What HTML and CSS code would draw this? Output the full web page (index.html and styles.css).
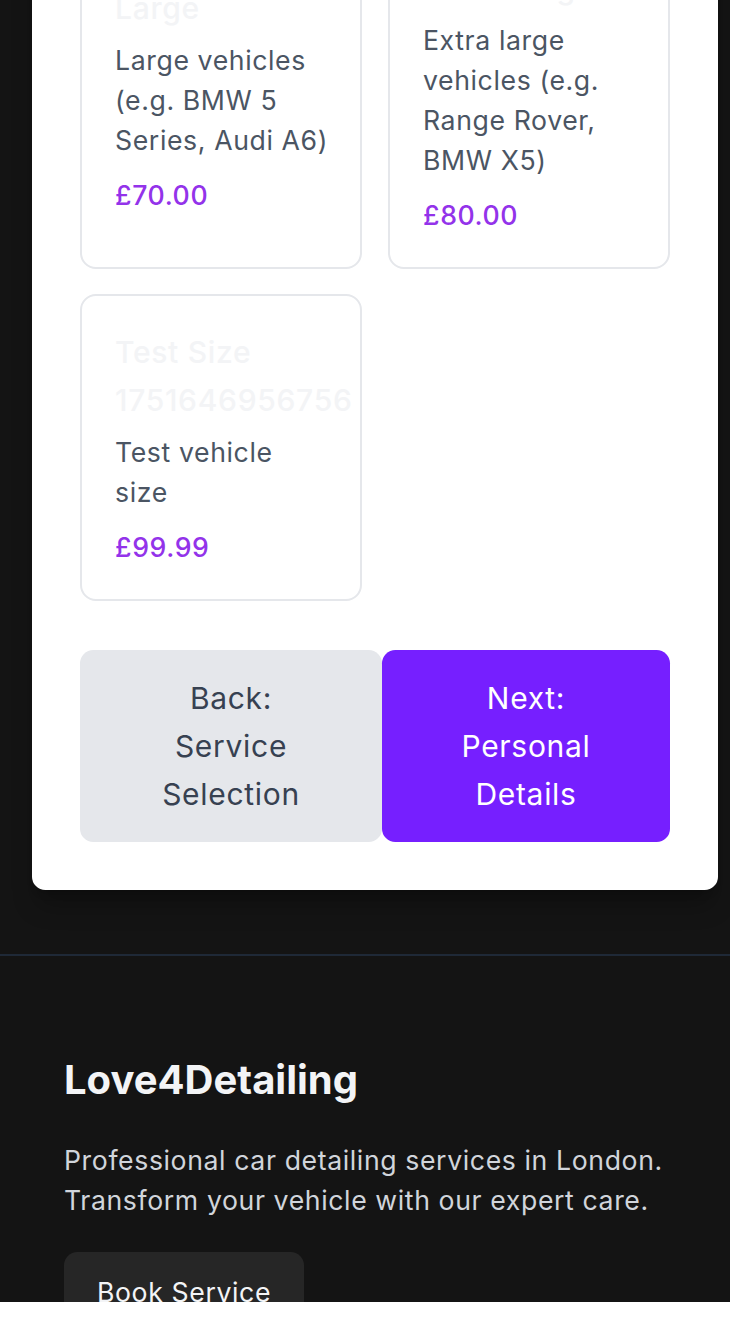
FILE: index.html
```html
<!DOCTYPE html>
<html lang="en">
<head>
<meta charset="utf-8">
<title>Love4Detailing – Vehicle Size</title>
<link rel="stylesheet" href="styles.css">
</head>
<body>
<div class="screen">
  <main class="page">
    <section class="panel">
      <div class="sizes">
        <div class="size">
          <div class="size-title">Large</div>
          <div class="size-desc">Large vehicles<br>(e.g. BMW 5<br>Series, Audi A6)</div>
          <div class="size-price">£70.00</div>
        </div>
        <div class="size">
          <div class="size-title">Extra Large</div>
          <div class="size-desc">Extra large<br>vehicles (e.g.<br>Range Rover,<br>BMW X5)</div>
          <div class="size-price">£80.00</div>
        </div>
        <div class="size">
          <div class="size-title">Test Size 1751646956756</div>
          <div class="size-desc">Test vehicle<br>size</div>
          <div class="size-price">£99.99</div>
        </div>
      </div>
      <div class="actions">
        <button class="btn btn-back">Back:<br>Service<br>Selection</button>
        <button class="btn btn-next">Next:<br>Personal<br>Details</button>
      </div>
    </section>
  </main>
  <footer class="footer">
    <h2 class="brand">Love4Detailing</h2>
    <p class="about">Professional car detailing services in London.<br>Transform your vehicle with our expert care.</p>
    <a class="book" href="#">Book Service</a>
  </footer>
</div>
</body>
</html>
```
FILE: styles.css
```css
html {
  background: #ffffff;
}

body {
  margin: 0;
  font-family: Inter, "Noto Sans", "Liberation Sans", sans-serif;
}

.screen {
  width: 730px;
  height: 1302px;
  overflow: hidden;
  background: #141414;
}

.page {
  padding: 0 12px 64px 32px;
}

.panel {
  background: #ffffff;
  border-radius: 13.33px;
  padding: 0 48px 48px;
  box-shadow: 0 20px 25px -5px rgba(0, 0, 0, 0.25), 0 8px 10px -6px rgba(0, 0, 0, 0.2);
}

.sizes {
  margin-top: -70px;
  display: grid;
  grid-template-columns: 1fr 1fr;
  column-gap: 26px;
  row-gap: 25px;
}

.size {
  border: 2px solid #e5e7eb;
  border-radius: 16px;
  padding: 32px 16px 32px 33px;
  display: flex;
  flex-direction: column;
  justify-content: center;
  min-width: 0;
}

.size-title {
  font-size: 30px;
  line-height: 48px;
  font-weight: 500;
  letter-spacing: 0.7px;
  color: #f3f4f6;
  margin-bottom: 8px;
}

.size-desc {
  font-size: 26.67px;
  line-height: 40px;
  letter-spacing: 0.6px;
  color: #4b5563;
}

.size-price {
  margin-top: 15px;
  font-size: 26.67px;
  line-height: 40px;
  font-weight: 500;
  letter-spacing: 0.6px;
  color: #9333ea;
}

.actions {
  display: flex;
  margin-top: 49px;
}

.btn {
  border: 0;
  border-radius: 13.33px;
  padding: 24px 16px;
  font-family: inherit;
  font-size: 30px;
  line-height: 48px;
  letter-spacing: 0.7px;
  text-align: center;
  cursor: pointer;
}

.btn-back {
  flex: 0 0 302px;
  background: #e5e7eb;
  color: #374151;
}

.btn-next {
  flex: 1 1 auto;
  background: #761fff;
  color: #ffffff;
}

.footer {
  border-top: 2px solid #1f2937;
  padding: 97px 64px 0;
}

.brand {
  margin: 0 0 34px;
  font-size: 40px;
  line-height: 53.33px;
  font-weight: 700;
  color: #f3f4f6;
}

.about {
  margin: 0 0 32px;
  font-size: 26.67px;
  line-height: 40px;
  letter-spacing: 0.6px;
  color: #d1d5db;
}

.book {
  display: inline-block;
  padding: 20px 33px;
  border-radius: 13.33px;
  background: #262626;
  color: #f3f4f6;
  font-size: 26.67px;
  line-height: 40px;
  letter-spacing: 0.6px;
  text-decoration: none;
}
```
